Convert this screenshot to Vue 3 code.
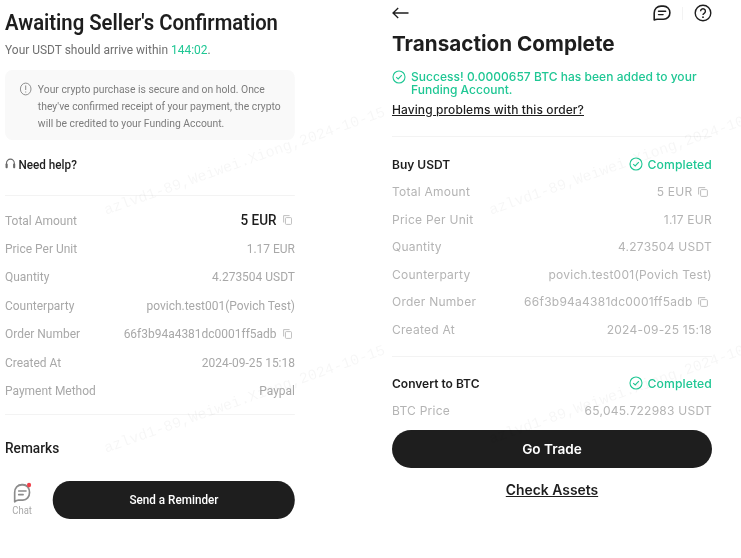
<script setup>
const leftRows = [
  { label: 'Total Amount', value: '5 EUR', copy: true, strong: true },
  { label: 'Price Per Unit', value: '1.17 EUR' },
  { label: 'Quantity', value: '4.273504 USDT' },
  { label: 'Counterparty', value: 'povich.test001(Povich Test)' },
  { label: 'Order Number', value: '66f3b94a4381dc0001ff5adb', copy: true },
  { label: 'Created At', value: '2024-09-25 15:18' },
  { label: 'Payment Method', value: 'Paypal' }
]

const rightRows = [
  { label: 'Total Amount', value: '5 EUR', copy: true },
  { label: 'Price Per Unit', value: '1.17 EUR' },
  { label: 'Quantity', value: '4.273504 USDT' },
  { label: 'Counterparty', value: 'povich.test001(Povich Test)' },
  { label: 'Order Number', value: '66f3b94a4381dc0001ff5adb', copy: true },
  { label: 'Created At', value: '2024-09-25 15:18' }
]

const mark = 'azlvd1-89,Weiwei.Xiong,2024-10-15'
const marks = [
  { x: 105, y: 203 },
  { x: 490, y: 203 },
  { x: 105, y: 441 },
  { x: 490, y: 432 }
]
</script>

<template>
  <div class="page">
    <section class="left">
      <h1>Awaiting Seller's Confirmation</h1>
      <p class="sub">Your USDT should arrive within <span class="green">144:02</span>.</p>

      <div class="notice">
        <svg class="info" viewBox="0 0 14 14" width="14" height="14">
          <circle cx="7" cy="7" r="5.9" fill="none" stroke="#8a8a8a" stroke-width="1" />
          <path d="M7 3.6v4.4M7 9.4v1" fill="none" stroke="#8a8a8a" stroke-width="1.1" />
        </svg>
        <p>Your crypto purchase is secure and on hold. Once they've confirmed receipt of your payment, the crypto will be credited to your Funding Account.</p>
      </div>

      <div class="help">
        <svg viewBox="0 0 12 12" width="12" height="12">
          <path d="M1.6 7V5.5a4.4 4.4 0 0 1 8.8 0V7" fill="none" stroke="#6a6a6a" stroke-width="1.2" />
          <rect x="0.6" y="5.6" width="2.4" height="4.6" rx="0.9" fill="#6a6a6a" />
          <rect x="9" y="5.6" width="2.4" height="4.6" rx="0.9" fill="#6a6a6a" />
        </svg>
        <span>Need help?</span>
      </div>

      <div class="list">
        <div v-for="row in leftRows" :key="row.label" class="row">
          <span class="label">{{ row.label }}</span>
          <span class="value" :class="{ strong: row.strong }">
            {{ row.value }}
            <svg v-if="row.copy" class="copy" viewBox="0 0 10 10" width="10" height="10">
              <path d="M0.6 7.5V0.6h6.6" fill="none" stroke="#b5b5b5" stroke-width="0.9" />
              <rect x="2.6" y="2.6" width="6.8" height="6.8" rx="1" fill="none" stroke="#b5b5b5" stroke-width="0.9" />
            </svg>
          </span>
        </div>
      </div>

      <div class="remarks">Remarks</div>

      <div class="actions">
        <div class="chat">
          <svg viewBox="0 0 20 20" width="22" height="22">
            <path d="M2.5 18V9.5C2.5 5.4 5.5 2.5 9.8 2.5h1c3.9 0 6.7 3 6.7 7s-2.8 7-6.7 7H6.4C5.1 16.5 3.9 17 2.5 18Z" fill="none" stroke="#8c8c8c" stroke-width="1.7" stroke-linejoin="round" />
            <path d="M6.5 8.2h7.5M6.5 11.5h4.6" fill="none" stroke="#8c8c8c" stroke-width="1.5" stroke-linecap="round" />
            <circle cx="17" cy="2.8" r="2.1" fill="#f0404a" />
          </svg>
          <span>Chat</span>
        </div>
        <button class="pill left-pill">Send a Reminder</button>
      </div>
    </section>

    <section class="right">
      <div class="topbar">
        <svg viewBox="0 0 17 12" width="17" height="12">
          <path d="M16.5 6H1M6.2 1 1 6l5.2 5" fill="none" stroke="#1e1e1e" stroke-width="1.3" />
        </svg>
        <div class="top-icons">
          <svg viewBox="0 0 18 16" width="18" height="16">
            <path d="M1.2 15V8C1.2 4 4.2 1.1 8 1.1h2.5c3.6 0 6.4 2.9 6.4 6.6s-2.8 6.6-6.4 6.6H4.5C3.3 14.3 2.2 14.5 1.2 15Z" fill="none" stroke="#1e1e1e" stroke-width="1.6" stroke-linejoin="round" />
            <path d="M5.5 6.2h7.2M5.5 9.6h4.6" fill="none" stroke="#1e1e1e" stroke-width="1.4" stroke-linecap="round" />
          </svg>
          <i class="sep"></i>
          <svg viewBox="0 0 18 18" width="18" height="18">
            <circle cx="9" cy="9" r="7.8" fill="none" stroke="#1e1e1e" stroke-width="1.4" />
            <path d="M6.6 7.2a2.4 2.4 0 1 1 3.6 2.1c-.8.5-1.2.9-1.2 1.8" fill="none" stroke="#1e1e1e" stroke-width="1.4" />
            <circle cx="9" cy="13.2" r="0.9" fill="#1e1e1e" />
          </svg>
        </div>
      </div>

      <h2>Transaction Complete</h2>

      <div class="success">
        <svg class="tick" viewBox="0 0 14 14" width="14" height="14">
          <circle cx="7" cy="7" r="6" fill="none" stroke="#1fc794" stroke-width="1.1" />
          <path d="M4.2 7.2 6.2 9l3.6-3.8" fill="none" stroke="#1fc794" stroke-width="1.1" />
        </svg>
        <p>Success! 0.0000657 BTC has been added to your Funding Account.</p>
      </div>

      <a class="problem">Having problems with this order?</a>

      <div class="block first">
        <div class="block-head">
          <b>Buy USDT</b>
          <span class="done">
            <svg viewBox="0 0 14 14" width="14" height="14">
              <circle cx="7" cy="7" r="6" fill="none" stroke="#1fc794" stroke-width="1.1" />
              <path d="M4.2 7.2 6.2 9l3.6-3.8" fill="none" stroke="#1fc794" stroke-width="1.1" />
            </svg>
            Completed
          </span>
        </div>
        <div v-for="row in rightRows" :key="row.label" class="r-row">
          <span>{{ row.label }}</span>
          <span class="r-value">
            {{ row.value }}
            <svg v-if="row.copy" class="copy" viewBox="0 0 10 10" width="10" height="10">
              <path d="M0.6 7.5V0.6h6.6" fill="none" stroke="#b5b5b5" stroke-width="0.9" />
              <rect x="2.6" y="2.6" width="6.8" height="6.8" rx="1" fill="none" stroke="#b5b5b5" stroke-width="0.9" />
            </svg>
          </span>
        </div>
      </div>

      <div class="block">
        <div class="block-head">
          <b>Convert to BTC</b>
          <span class="done">
            <svg viewBox="0 0 14 14" width="14" height="14">
              <circle cx="7" cy="7" r="6" fill="none" stroke="#1fc794" stroke-width="1.1" />
              <path d="M4.2 7.2 6.2 9l3.6-3.8" fill="none" stroke="#1fc794" stroke-width="1.1" />
            </svg>
            Completed
          </span>
        </div>
        <div class="r-row">
          <span>BTC Price</span>
          <span class="r-value">65,045.722983 USDT</span>
        </div>
      </div>

      <button class="pill right-pill">Go Trade</button>
      <a class="assets">Check Assets</a>
    </section>

    <span
      v-for="m in marks"
      :key="m.x + '-' + m.y"
      class="watermark"
      :style="{ left: m.x + 'px', top: m.y + 'px' }"
    >{{ mark }}</span>
  </div>
</template>

<style scoped>
.page {
  position: relative;
  display: flex;
  width: 741px;
  height: 558px;
  overflow: hidden;
  background: #fff;
  color: #1e1e1e;
  filter: blur(0.35px);
}

/* the left phone capture is squeezed horizontally */
.left {
  flex: none;
  width: 322.2px;
  margin-left: 5px;
  transform: scaleX(0.9);
  transform-origin: left top;
  font-family: Roboto, "Liberation Sans", sans-serif;
}

.right {
  flex: none;
  width: 320px;
  margin-left: 64.8px;
  font-family: Inter, "Liberation Sans", sans-serif;
}

h1 {
  margin: 8px 0 0;
  font-size: 22.5px;
  line-height: 28px;
  font-weight: 600;
  white-space: nowrap;
}

.sub {
  margin: 6px 0 0;
  font-size: 13.3px;
  line-height: 16px;
  color: #707070;
}

.green {
  color: #1fc794;
}

.notice {
  display: flex;
  gap: 7px;
  height: 70px;
  margin-top: 12px;
  padding: 11px 8px 0 15.5px;
  box-sizing: border-box;
  border-radius: 8px;
  background: #f9f9f9;
}

.info {
  flex: none;
  margin-top: 1px;
}

.notice p {
  margin: 0;
  font-size: 11.5px;
  line-height: 17px;
  color: #7c7c7c;
}

.help {
  display: flex;
  align-items: center;
  gap: 3px;
  height: 16px;
  margin-top: 16px;
  font-size: 13px;
  font-weight: 500;
}

.list {
  margin-top: 23px;
  padding: 10px 0 9px;
  border-top: 1px solid #f3f3f3;
  border-bottom: 1px solid #f3f3f3;
}

.row {
  display: flex;
  justify-content: space-between;
  align-items: center;
  height: 28.4px;
  font-size: 13.3px;
  color: #a8a8a8;
}

.value {
  display: flex;
  align-items: center;
  gap: 7px;
  color: #a8a8a8;
}

.value.strong {
  font-size: 15px;
  font-weight: 500;
  color: #1e1e1e;
}

.copy {
  flex: none;
  margin-right: 3.5px;
}

.remarks {
  margin-top: 24px;
  font-size: 15.2px;
  line-height: 18px;
  font-weight: 500;
}

.actions {
  display: flex;
  align-items: center;
  margin-top: 24px;
}

.chat {
  display: flex;
  flex-direction: column;
  align-items: center;
  width: 38px;
  margin-right: 15.3px;
  font-size: 10.5px;
  color: #a8a8a8;
}

.pill {
  border: 0;
  border-radius: 19px;
  background: #1e1e1e;
  color: #fff;
  height: 38px;
  padding: 0;
}

.left-pill {
  width: 268.9px;
  font-family: Roboto, "Liberation Sans", sans-serif;
  font-size: 13px;
  font-weight: 500;
}

.topbar {
  display: flex;
  justify-content: space-between;
  align-items: center;
  height: 20px;
  margin-top: 3px;
}

.top-icons {
  display: flex;
  align-items: center;
  gap: 11px;
}

.sep {
  width: 1px;
  height: 13px;
  background: #f3f3f3;
}

h2 {
  margin: 8px 0 0;
  font-size: 20.7px;
  line-height: 26px;
  font-weight: 700;
}

.success {
  display: flex;
  gap: 5px;
  margin-top: 13px;
  font-size: 12px;
  letter-spacing: 0.03px;
  line-height: 13px;
  font-weight: 500;
  color: #1fc794;
}

.tick {
  flex: none;
}

.success p {
  margin: 0;
}

.problem {
  display: block;
  margin-top: 7px;
  font-size: 12px;
  letter-spacing: 0.1px;
  line-height: 14px;
  font-weight: 500;
  text-decoration: underline;
}

.block {
  margin-top: 13px;
  padding-top: 12px;
  border-top: 1px solid #f3f3f3;
}

.block.first {
  margin-top: 19px;
  padding-top: 13px;
}

.block-head {
  display: flex;
  justify-content: space-between;
  align-items: center;
  height: 28px;
  font-size: 12px;
}

.block-head b {
  font-weight: 600;
}

.done {
  display: flex;
  align-items: center;
  gap: 4px;
  font-size: 12.2px;
  letter-spacing: 0.1px;
  font-weight: 500;
  color: #1fc794;
}

.r-row {
  display: flex;
  justify-content: space-between;
  align-items: center;
  height: 27.5px;
  font-size: 12px;
  letter-spacing: 0.25px;
  color: #b4b4b4;
}

.r-value {
  display: flex;
  align-items: center;
  gap: 6px;
}

.right-pill {
  display: block;
  width: 320px;
  margin-top: 5px;
  font-family: Inter, "Liberation Sans", sans-serif;
  font-size: 13.6px;
  font-weight: 600;
}

.assets {
  display: block;
  margin-top: 14px;
  text-align: center;
  font-size: 13.9px;
  line-height: 16px;
  font-weight: 600;
  text-decoration: underline;
}

.watermark {
  position: absolute;
  font-family: "Liberation Mono", "DejaVu Sans Mono", monospace;
  font-size: 15px;
  line-height: 18px;
  white-space: nowrap;
  color: rgba(0, 0, 0, 0.035);
  transform: rotate(-19.5deg);
  transform-origin: left center;
  pointer-events: none;
}
</style>
